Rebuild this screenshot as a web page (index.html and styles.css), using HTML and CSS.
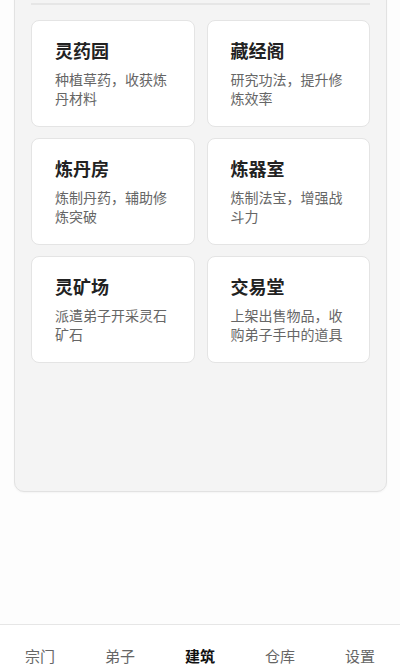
FILE: index.html
```html
<!DOCTYPE html>
<html lang="zh-CN">
<head>
    <meta charset="UTF-8">
    <meta name="viewport" content="width=device-width, initial-scale=1.0">
    <title>建筑</title>
    <link rel="stylesheet" href="styles.css">
</head>
<body>
    <div class="app">
        <main class="main">
            <section class="panel">
                <div class="divider"></div>
                <div class="buildings">
                    <div class="card">
                        <h3 class="card-title">灵药园</h3>
                        <p class="card-desc">种植草药，收获炼丹材料</p>
                    </div>
                    <div class="card">
                        <h3 class="card-title">藏经阁</h3>
                        <p class="card-desc">研究功法，提升修炼效率</p>
                    </div>
                    <div class="card">
                        <h3 class="card-title">炼丹房</h3>
                        <p class="card-desc">炼制丹药，辅助修炼突破</p>
                    </div>
                    <div class="card">
                        <h3 class="card-title">炼器室</h3>
                        <p class="card-desc">炼制法宝，增强战斗力</p>
                    </div>
                    <div class="card">
                        <h3 class="card-title">灵矿场</h3>
                        <p class="card-desc">派遣弟子开采灵石矿石</p>
                    </div>
                    <div class="card">
                        <h3 class="card-title">交易堂</h3>
                        <p class="card-desc">上架出售物品，收购弟子手中的道具</p>
                    </div>
                </div>
            </section>
        </main>

        <nav class="tabbar">
            <a class="tab">宗门</a>
            <a class="tab">弟子</a>
            <a class="tab active">建筑</a>
            <a class="tab">仓库</a>
            <a class="tab">设置</a>
        </nav>
    </div>
</body>
</html>
```

FILE: styles.css
```css
* {
    box-sizing: border-box;
}

body {
    margin: 0;
    font-family: "Noto Sans CJK SC", "Noto Sans", sans-serif;
    background-color: #fdfdfd;
    color: #222;
}

.app {
    height: 666px;
    overflow: hidden;
}

.main {
    height: 624px;
    padding: 0 13px 0 14px;
    overflow: hidden;
}

/* list is scrolled: the panel header sits above the fold */
.panel {
    margin-top: -12px;
    min-height: 504px;
    padding: 14px 16px 20px;
    background-color: #f4f4f4;
    border: 1px solid #e2e2e2;
    border-radius: 10px;
    box-shadow: 0 1px 2px rgba(0, 0, 0, 0.04);
}

.divider {
    height: 2px;
    background-color: #e6e6e6;
    margin-bottom: 15px;
}

.buildings {
    display: grid;
    grid-template-columns: 1fr 1fr;
    column-gap: 12px;
    row-gap: 11px;
}

.card {
    height: 107px;
    padding: 15px 22px 0 23px;
    background-color: #fff;
    border: 1px solid #e4e4e4;
    border-radius: 8px;
}

.card-title {
    margin: 0 0 6px;
    font-size: 18px;
    line-height: 28px;
    font-weight: 700;
    color: #222;
}

.card-desc {
    margin: 0;
    font-size: 14px;
    line-height: 19px;
    color: #666;
}

.tabbar {
    display: flex;
    border-top: 1px solid #e6e6e6;
    background-color: #fff;
    padding-top: 20px;
    height: 60px;
}

.tab {
    flex: 1;
    text-align: center;
    font-size: 15px;
    line-height: 22px;
    color: #666;
    cursor: pointer;
}

.tab.active {
    color: #111;
    font-weight: 700;
}
```
